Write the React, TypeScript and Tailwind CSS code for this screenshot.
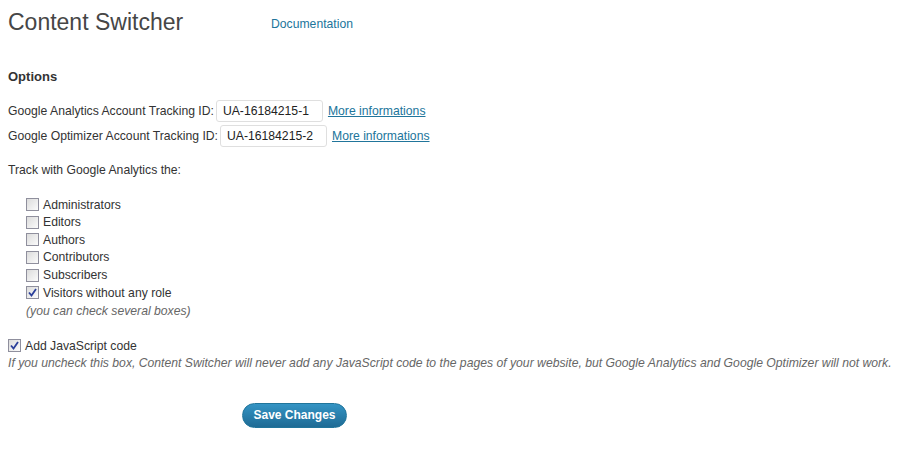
import React from "react";

function Box({ checked }: { checked?: boolean }) {
  return (
    <span className="inline-flex h-[13px] w-[13px] shrink-0 items-center justify-center border border-[#8f8f9d] bg-gradient-to-br from-[#dcdcdc] to-[#fbfbfb]">
      {checked && (
        <svg width="9" height="9" viewBox="0 0 9 9">
          <path d="M1 4.5 L3.5 7.5 L8 1" fill="none" stroke="#2a3f9a" strokeWidth="1.8" />
        </svg>
      )}
    </span>
  );
}

export default function App() {
  const roles = [
    ["Administrators", false],
    ["Editors", false],
    ["Authors", false],
    ["Contributors", false],
    ["Subscribers", false],
    ["Visitors without any role", true],
  ] as const;
  return (
    <div className="h-[450px] w-[900px] bg-white pl-2 text-[12.2px] text-[#333] font-['Liberation_Sans',Arial,sans-serif]">
      <div className="flex items-start pt-[6px]">
        <h1 className="w-[263px] text-[23px] leading-[32px] text-[#464646]">Content Switcher</h1>
        <a className="mt-[11px] text-[12.2px] leading-[14px] text-[#21759b]">Documentation</a>
      </div>
      <h3 className="mt-[30px] text-[13px] font-bold leading-[18px]">Options</h3>
      <div className="mt-[14px] flex items-center leading-[14px]">
        <span>Google Analytics Account Tracking ID:</span>
        <span className="ml-[2px] flex h-[22px] w-[107px] items-center rounded-[3px] border border-[#dfdfdf] px-[6px] text-[#222]">UA-16184215-1</span>
        <a className="ml-[5px] text-[#21759b] underline">More informations</a>
      </div>
      <div className="mt-[3px] flex items-center leading-[14px]">
        <span>Google Optimizer Account Tracking ID:</span>
        <span className="ml-[2px] flex h-[22px] w-[107px] items-center rounded-[3px] border border-[#dfdfdf] px-[6px] text-[#222]">UA-16184215-2</span>
        <a className="ml-[5px] text-[#21759b] underline">More informations</a>
      </div>
      <p className="mt-[16px] leading-[14px]">Track with Google Analytics the:</p>
      <div className="mt-[19px] pl-[18px]">
        {roles.map(([label, c]) => (
          <div key={label} className="flex h-[17.6px] items-center gap-[4px]">
            <Box checked={c} />
            <span>{label}</span>
          </div>
        ))}
        <p className="mt-[2px] italic leading-[14px] text-[#666]">(you can check several boxes)</p>
      </div>
      <div className="mt-[21px] flex items-center gap-[4px] leading-[14px]">
        <Box checked />
        <span>Add JavaScript code</span>
      </div>
      <p className="mt-[3px] italic leading-[14px] text-[#666]">
        If you uncheck this box, Content Switcher will never add any JavaScript code to the pages of your website, but Google Analytics and Google Optimizer will not work.
      </p>
      <div className="mt-[33px] pl-[234px]">
        <button className="flex h-[25px] w-[105px] items-center justify-center rounded-full border border-[#21759b] bg-gradient-to-b from-[#3494c4] to-[#1f6b95] text-[12px] font-bold text-white">
          Save Changes
        </button>
      </div>
    </div>
  );
}
